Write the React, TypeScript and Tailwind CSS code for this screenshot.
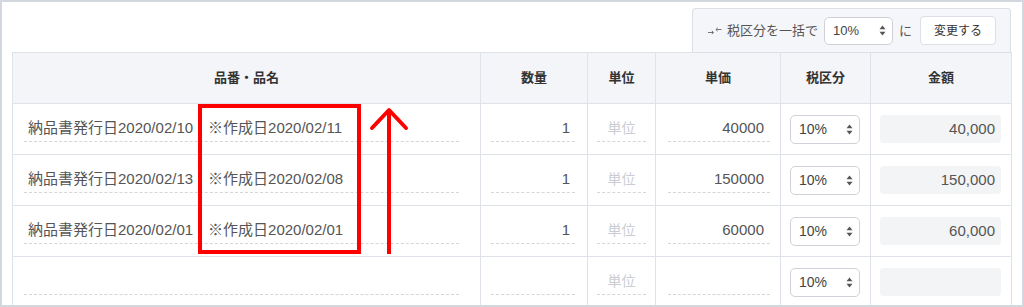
import React from 'react'

/* ── Rows ─────────────────────────────────────────── */
const ROWS = [
  { name: '納品書発行日2020/02/10　※作成日2020/02/11', qty: '1', price: '40000', amount: '40,000' },
  { name: '納品書発行日2020/02/13　※作成日2020/02/08', qty: '1', price: '150000', amount: '150,000' },
  { name: '納品書発行日2020/02/01　※作成日2020/02/01', qty: '1', price: '60000', amount: '60,000' },
  { name: '', qty: '', price: '', amount: '' },
]

const FONT = "font-['Liberation_Sans','Noto_Sans_CJK_JP',sans-serif]"

function UpDown() {
  return (
    <svg width="7" height="11" viewBox="0 0 7 11" className="text-[#555] shrink-0">
      <path d="M3.5 0.5 L6.5 4.2 L0.5 4.2 Z" fill="currentColor" />
      <path d="M3.5 10.5 L6.5 6.8 L0.5 6.8 Z" fill="currentColor" />
    </svg>
  )
}

function TaxSelect({ size = 'h-[29px] w-[70px] text-[14px]' }: { size?: string }) {
  return (
    <div className={`shrink-0 rounded-[5px] border border-[#cfd3d9] bg-white flex items-center justify-between pl-2 pr-[6px] text-[#444] ${size}`}>
      <span>10%</span>
      <UpDown />
    </div>
  )
}

function Th({ children }: { children: React.ReactNode }) {
  return (
    <th className="border border-[#dfe2e8] bg-[#f4f5f8] text-[13px] font-bold text-[#333] text-center align-middle">
      {children}
    </th>
  )
}

export default function App() {
  return (
    <div className={`h-[307px] w-[1024px] border-2 border-[#d3d8df] bg-white overflow-hidden ${FONT}`}>
      <div className="relative pt-[6px] pl-[10px] pr-[11px]">
        {/* 一括変更ツールバー */}
        <div className="flex justify-end">
          <div className="w-[319px] h-[45px] -mb-px rounded-t-[3px] border border-[#dcdfe5] bg-[#f5f6f9] flex items-center pl-[15px] pr-[14px] whitespace-nowrap">
            <svg width="14" height="8" viewBox="0 0 14 8" className="text-[#777] mr-[5px] shrink-0">
              <path d="M0 5.5 H5.5 M3.8 3.8 L5.6 5.5 L3.8 7.2" stroke="currentColor" strokeWidth="1" fill="none" />
              <path d="M13.5 2.5 H8 M9.7 0.8 L7.9 2.5 L9.7 4.2" stroke="currentColor" strokeWidth="1" fill="none" />
            </svg>
            <span className="shrink-0 text-[13px] text-[#555]">税区分を一括で</span>
            <div className="ml-[6px]">
              <TaxSelect size="h-[28px] w-[69px] text-[13px]" />
            </div>
            <span className="shrink-0 ml-[6px] text-[13px] text-[#555]">に</span>
            <button className="shrink-0 ml-[8px] h-[29px] w-[76px] rounded-[4px] border border-[#dcdfe5] bg-white text-[12px] text-[#333]">
              変更する
            </button>
          </div>
        </div>

        {/* 明細テーブル */}
        <table className="w-[999px] table-fixed border-collapse">
          <colgroup>
            <col className="w-[468px]" />
            <col className="w-[107px]" />
            <col className="w-[68px]" />
            <col className="w-[125px]" />
            <col className="w-[90px]" />
            <col className="w-[141px]" />
          </colgroup>
          <thead>
            <tr className="h-[51px]">
              <Th>品番・品名</Th>
              <Th>数量</Th>
              <Th>単位</Th>
              <Th>単価</Th>
              <Th>税区分</Th>
              <Th>金額</Th>
            </tr>
          </thead>
          <tbody>
            {ROWS.map((r, i) => (
              <tr key={i} className="h-[51px]">
                <td className="border border-[#dfe2e8] pl-[11px] pr-[21px]">
                  <div className="h-[26px] border-b border-dashed border-[#d3d6db] pl-[4px] text-[15px] leading-[24px] text-[#555] whitespace-nowrap">
                    {r.name}
                  </div>
                </td>
                <td className="border border-[#dfe2e8] pl-[10px] pr-[12px]">
                  <div className="h-[26px] border-b border-dashed border-[#d3d6db] pr-[5px] text-right text-[15px] leading-[24px] text-[#555]">
                    {r.qty}
                  </div>
                </td>
                <td className="border border-[#dfe2e8] pl-[9px] pr-[9px]">
                  <div className="h-[26px] border-b border-dashed border-[#d3d6db] text-center text-[14px] leading-[24px] text-[#c9ccd1]">
                    単位
                  </div>
                </td>
                <td className="border border-[#dfe2e8] pl-[12px] pr-[10px]">
                  <div className="h-[26px] border-b border-dashed border-[#d3d6db] pr-[6px] text-right text-[15px] leading-[24px] text-[#555]">
                    {r.price}
                  </div>
                </td>
                <td className="border border-[#dfe2e8] pl-[9px]">
                  <TaxSelect />
                </td>
                <td className="border border-[#dfe2e8] pl-[9px] pr-[10px]">
                  <div className="h-[28px] rounded-[4px] bg-[#f3f4f6] pr-[6px] text-right text-[15px] leading-[28px] text-[#555]">
                    {r.amount}
                  </div>
                </td>
              </tr>
            ))}
          </tbody>
        </table>

        {/* 注釈（赤枠と矢印） */}
        <div className="absolute left-[196px] top-[102px] w-[163px] h-[150px] border-4 border-[#ff0000]" />
        <svg className="absolute left-[366px] top-[104px]" width="42" height="148" viewBox="0 0 42 148">
          <path d="M21 4 V148" stroke="#ff0000" strokeWidth="4" fill="none" />
          <path d="M4 22 L21 4 L38 22" stroke="#ff0000" strokeWidth="4" fill="none" strokeLinecap="round" strokeLinejoin="round" />
        </svg>
      </div>
    </div>
  )
}
